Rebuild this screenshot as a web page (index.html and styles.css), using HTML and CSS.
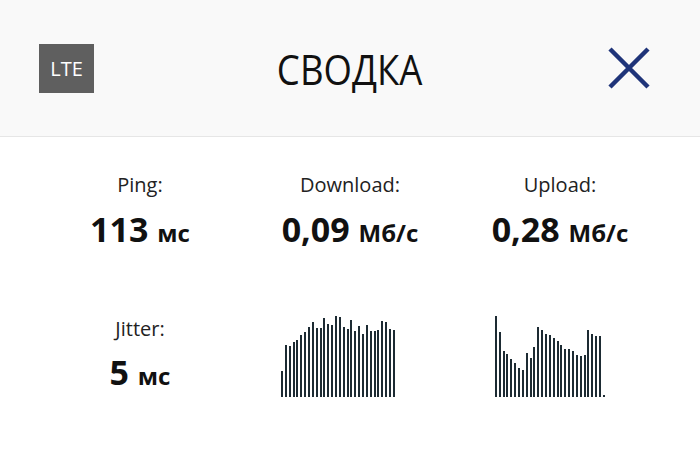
FILE: index.html
```html
<!DOCTYPE html>
<html>
<head>
    <meta charset="UTF-8">
    <meta name="viewport" content="width=device-width, initial-scale=1.0">
    <title>Сводка</title>
    <link rel="stylesheet" href="styles.css">
</head>
<body>
    <div class="header">
        <div class="badge">LTE</div>
        <h1 class="title">СВОДКА</h1>
        <div class="close">
            <svg width="44" height="42" viewBox="0 0 44 42">
                <path d="M3 2 L41 40 M41 2 L3 40" stroke="#1f3479" stroke-width="4.5" fill="none"/>
            </svg>
        </div>
    </div>
    <div class="summary">
        <div class="stat">
            <p class="label">Ping:</p>
            <p class="value">113 <span class="unit">мс</span></p>
        </div>
        <div class="stat">
            <p class="label">Download:</p>
            <p class="value">0,09 <span class="unit">Мб/с</span></p>
        </div>
        <div class="stat">
            <p class="label">Upload:</p>
            <p class="value">0,28 <span class="unit">Мб/с</span></p>
        </div>
        <div class="stat stat-low">
            <p class="label">Jitter:</p>
            <p class="value value-small">5 <span class="unit">мс</span></p>
        </div>
        <div class="stat stat-low">
            <div class="chart" id="download-chart"></div>
        </div>
        <div class="stat stat-low">
            <div class="chart" id="upload-chart"></div>
        </div>
    </div>
    <script>
        const downloadData = [26, 52, 51, 55, 57, 62, 65, 70, 75, 69, 69, 79, 73, 72, 81, 80, 70, 68, 77, 66, 71, 63, 72, 66, 66, 67, 76, 75, 68, 67];
        const uploadData = [0, 81, 65, 46, 43, 38, 34, 29, 27, 44, 39, 50, 70, 67, 63, 62, 59, 56, 52, 48, 48, 46, 42, 41, 42, 67, 63, 61, 61, 2];

        function renderChart(id, data) {
            const chart = document.getElementById(id);
            data.forEach(h => {
                const bar = document.createElement('div');
                bar.classList.add('bar');
                bar.style.height = h + 'px';
                chart.appendChild(bar);
            });
        }

        renderChart('download-chart', downloadData);
        renderChart('upload-chart', uploadData);
    </script>
</body>
</html>
```

FILE: styles.css
```css
body {
    margin: 0;
    padding: 0;
    background-color: #fff;
    font-family: "Open Sans", "Noto Sans", sans-serif;
    color: #111;
}

.header {
    display: grid;
    grid-template-columns: 1fr auto 1fr;
    align-items: center;
    height: 136px;
    padding: 0 39px;
    background-color: #f9f9f9;
    border-bottom: 1px solid #e6e6e6;
}

.badge {
    justify-self: start;
    width: 55px;
    height: 49px;
    background-color: #5f5f5f;
    color: #fff;
    font-size: 20px;
    line-height: 49px;
    text-align: center;
}

.title {
    margin: 0;
    font-size: 42px;
    font-weight: 400;
    color: #111;
    transform: scaleX(0.87);
}

.close {
    justify-self: end;
    display: flex;
    margin-right: 10px;
}

.summary {
    display: grid;
    grid-template-columns: repeat(3, 210px);
    padding: 36px 35px 0;
}

.stat {
    display: flex;
    flex-direction: column;
    align-items: center;
}

.stat-low {
    margin-top: 64px;
}

.label {
    margin: 0;
    font-size: 20px;
    line-height: 24px;
    color: #222;
}

.value {
    margin: 12px 0 0;
    font-size: 34px;
    line-height: 40px;
    font-weight: 700;
}

.value-small {
    margin-top: 11px;
}

.unit {
    font-size: 24px;
}

.chart {
    display: flex;
    align-items: flex-end;
    gap: 1.87px;
    width: 138px;
    height: 82px;
    margin-top: -2px;
}

.bar {
    width: 2px;
    flex-shrink: 0;
    background-color: #1d2b33;
}
```
